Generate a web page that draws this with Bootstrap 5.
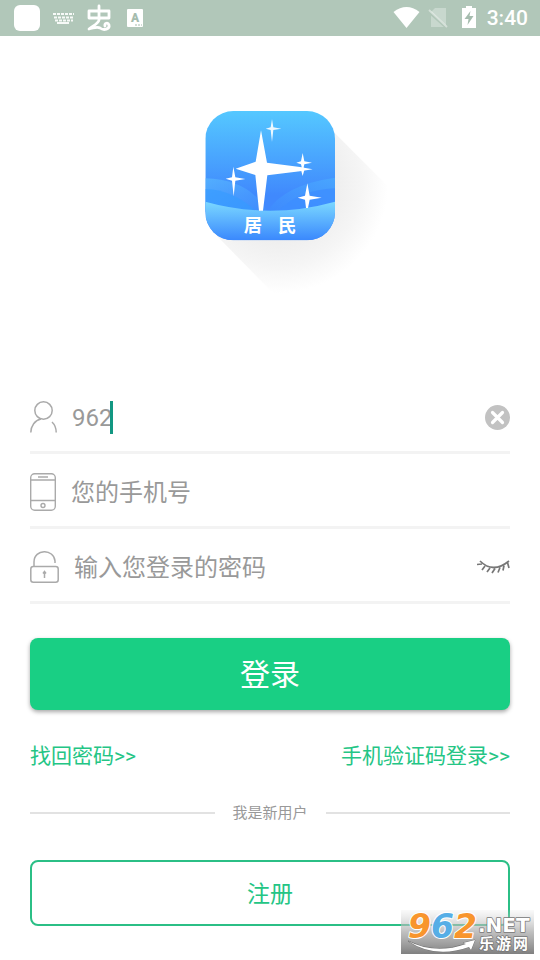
<!DOCTYPE html>
<html lang="zh-CN">
<head>
<meta charset="utf-8">
<meta name="viewport" content="width=device-width, initial-scale=1">
<title>登录</title>
<link href="https://cdn.jsdelivr.net/npm/bootstrap@5.3.0/dist/css/bootstrap.min.css" rel="stylesheet">
<style>
  body { font-family: Roboto, "Noto Sans CJK SC", sans-serif; color: #999; background: #fff; }
  svg { display: block; flex-shrink: 0; }
  .status { height: 36px; background: #b1c7b9; padding: 0 12px 0 14px; }
  .clock { font-size: 21px; line-height: 38px; font-weight: 500; }
  .brand { padding: 59px 0 84px; }
  .page { padding: 0 30px; }
  .field { height: 75px; gap: 15px; padding-top: 4px; border-bottom: 3px solid #f3f3f3; }
  .field input { font-size: 24px; line-height: 36px; padding: 2px 0 0; color: #999; outline: 0; }
  .field input::placeholder { color: #999; opacity: 1; }
  .caret { left: 38px; width: 3px; height: 33px; background: #129782; }
  .btn-login { height: 72px; margin-top: 34px; font-size: 30px; line-height: 45px; border-radius: 8px; border: 0;
    --bs-btn-bg: #19cf84; --bs-btn-color: #fff; --bs-btn-hover-bg: #16bd78; --bs-btn-hover-color: #fff; box-shadow: 0 2px 4px rgba(0,0,0,.35); }
  .links { margin-top: 30px; font-size: 21px; line-height: 32px; }
  .links a { color: #24c585; }
  .newuser { margin-top: 29px; gap: 18px; font-size: 15px; line-height: 24px; }
  .rule { height: 2px; background: #e2e2e2; }
  .btn-reg { height: 66px; margin-top: 35px; padding: 8px 12px 4px; font-size: 23px; line-height: 36px; border-radius: 8px; border: 2px solid #2bbf86;
    --bs-btn-color: #24c585; --bs-btn-hover-color: #fff; --bs-btn-hover-bg: #24c585; }
  .stamp { right: 6px; bottom: 6px; pointer-events: none; }
  .stamp svg { overflow: visible; }
</style>
</head>
<body>
<div class="position-relative min-vh-100">
  <header class="status d-flex align-items-center justify-content-between text-white">
    <div class="d-flex align-items-center">
      <svg width="130" height="36" viewBox="14 0 130 36" aria-hidden="true">
        <rect x="14" y="5" width="26" height="26" rx="6" fill="#fff"/>
        <g fill="none" stroke="#fff" stroke-opacity=".9" stroke-width="2" stroke-dasharray="3 1"><path d="M53 14h21M54 17.500h19M55 20.500h18"/><path d="M57 23h12" stroke-dasharray="none"/></g>
        <g fill="none" stroke="#fff" stroke-width="2.800" stroke-linecap="round" stroke-linejoin="round">
          <path d="M99 6V20M89 11H109V18H89ZM99 20C98 24 94 25 89 29C94 28 97 26 100 28C104 31 110 29 109 25C108 22 104 23 105 26"/>
        </g>
        <rect x="127" y="9" width="16" height="18" rx="1" fill="#fff"/>
        <text x="135" y="22" text-anchor="middle" font-family="Roboto, sans-serif" font-size="12" font-weight="900" fill="#a5bcae">A</text>
        <path d="M135 25h7" stroke="#a5bcae" stroke-dasharray="2 1"/>
      </svg>
    </div>
    <div class="d-flex align-items-center">
      <svg width="94" height="36" viewBox="392 0 94 36" aria-hidden="true">
        <path d="M392.500 12Q405.500 2 418.500 12L405.500 28Z" fill="#fff"/>
        <path d="M434 8h11v19h-15V12Z" fill="#fff" fill-opacity=".3"/>
        <path d="M427 11l19 17" stroke="#b1c7b9" stroke-width="3"/><path d="M428 10l18 17" stroke="#fff" stroke-opacity=".45" stroke-width="1.800"/>
        <path d="M461 8h4V6h6v2h4v20h-14Z" fill="#fff"/><path d="M469.500 11l-6 8h4l-1 6 6-9h-4Z" fill="#a5bcae"/>
      </svg>
      <span class="clock">3:40</span>
    </div>
  </header>

  <div class="brand d-flex justify-content-center">
    <svg width="240" height="200" viewBox="-120 0 720 600" role="img" aria-label="居民">
      <defs>
        <linearGradient id="sky" x2="0" y2="1"><stop stop-color="#55c8ff"/><stop offset=".65" stop-color="#4089fd"/><stop offset="1" stop-color="#4089fd"/></linearGradient>
        <linearGradient id="band" x2="0" y2="1"><stop stop-color="#7bd8ff"/><stop offset="1" stop-color="#3a88fd"/></linearGradient>
        <linearGradient id="leaf" x2="1" y2="1"><stop stop-color="#5bbcff"/><stop offset="1" stop-color="#3f8cfd"/></linearGradient>
        <linearGradient id="leafr" x1="1" x2="0" y2="1"><stop stop-color="#4bacff"/><stop offset="1" stop-color="#3e8bfd"/></linearGradient>
        <radialGradient id="cast" gradientUnits="userSpaceOnUse" cx="265" cy="265" r="330"><stop offset=".5" stop-color="#eee"/><stop offset=".75" stop-color="#f5f5f5"/><stop offset="1" stop-color="#fff"/></radialGradient>
        <clipPath id="tile"><rect x="46" y="48" width="389" height="388" rx="84"/></clipPath>
      </defs>
      <path d="M410 90L600 280V600H255L70 412Z" fill="url(#cast)"/>
      <g clip-path="url(#tile)">
        <rect x="46" y="48" width="389" height="388" fill="url(#sky)"/>
        <path d="M46 250Q180 254 232 350H46Z" fill="url(#leaf)" opacity=".65"/>
        <path d="M46 282Q130 284 200 350H46Z" fill="#369bff" opacity=".65"/>
        <path d="M435 248Q280 270 232 350H435Z" fill="url(#leafr)" opacity=".7"/>
        <path d="M435 280Q320 286 265 350H435Z" fill="#3d8dff" opacity=".75"/>
        <path d="M46 320Q240 374 435 320V436H46Z" fill="url(#band)"/>
        <g fill="#fff">
          <path d="M213 106L231 203L330 216L368 223L330 229L232 241L219 347H207L196 240L137 221L197 200Z"/>
          <path d="M246 72L250 97L274 101L250 105L246 141L242 105L227 101L242 97Z" opacity=".9"/>
          <path d="M338 174L343 199L366 203L343 208L341 217L343 225L338 243L333 225L335 216L333 208L319 203L333 199Z"/>
          <path d="M130 215L136 247L166 252L136 257L131 304L126 257L107 251L126 247Z"/>
          <path d="M352 265L359 302L395 308L359 314L354 339H348L345 314L323 308L345 302Z"/>
        </g>
      </g>
      <g fill="#fff" font-family="'Noto Sans CJK SC', sans-serif" font-size="55" font-weight="700"><text x="161" y="410">居</text><text x="264" y="410">民</text></g>
    </svg>
  </div>

  <main class="page">
    <form>
      <div class="field d-flex align-items-center">
        <svg width="27" height="33" viewBox="0 0 27 33" fill="none" stroke="#aaa" stroke-width="1.500" aria-hidden="true"><circle cx="13.500" cy="9.500" r="8.700"/><path d="M.8 31.500C.8 25 5 19 11 18M22 21Q26.200 25 26.200 31.500"/></svg>
        <div class="position-relative d-flex align-items-center flex-grow-1">
          <input class="form-control-plaintext" type="text" value="962" aria-label="用户名">
          <span class="caret position-absolute"></span>
        </div>
        <button type="button" class="btn p-0 border-0" aria-label="清除">
          <svg width="25" height="25" viewBox="0 0 25 25"><circle cx="12.500" cy="12.500" r="12.500" fill="#c2c2c2"/><path d="M7.500 7.500l10 10m0-10l-10 10" stroke="#fff" stroke-width="3.200" stroke-linecap="round"/></svg>
        </button>
      </div>
      <div class="field d-flex align-items-center">
        <svg width="26" height="38" viewBox="0 0 26 38" fill="none" stroke="#aaa" stroke-width="1.400" aria-hidden="true"><rect x=".7" y=".7" width="24.600" height="36.600" rx="4"/><path d="M1 7H25M1 27.500H25M8 4H18"/><circle cx="13" cy="32.500" r="2"/></svg>
        <input class="form-control-plaintext" type="tel" placeholder="您的手机号" aria-label="手机号">
      </div>
      <div class="field d-flex align-items-center">
        <svg width="29" height="32" viewBox="0 0 29 32" fill="none" stroke="#aaa" stroke-width="1.500" aria-hidden="true"><rect x=".8" y="15.500" width="27.400" height="15.700" rx="2.500"/><path d="M4 15V11C4 -2.500 24 -2.500 25 10V12M14.500 20.500V27M13 22.500L14.500 20.500L16 22.500"/></svg>
        <input class="form-control-plaintext" type="password" placeholder="输入您登录的密码" aria-label="密码">
        <button type="button" class="btn p-0 border-0" aria-label="显示密码">
          <svg width="34" height="14" viewBox="0 0 34 14" fill="none" stroke="#777" stroke-width="1.700"><path d="M4 1Q17 14 33 1M1 4.500L6 4M9 6L6 10M14 8L11 12M19 8.500L16 13M24 7.500L22 12.500M28 5.500L27 10.500M31.500 2.500L33 8"/></svg>
        </button>
      </div>
      <button type="submit" class="btn btn-login w-100 d-block">登录</button>
    </form>
    <div class="links d-flex justify-content-between">
      <a class="text-decoration-none" href="#recover">找回密码&gt;&gt;</a>
      <a class="text-decoration-none" href="#sms">手机验证码登录&gt;&gt;</a>
    </div>
    <div class="newuser d-flex align-items-center">
      <span class="rule flex-fill"></span><span>我是新用户</span><span class="rule flex-fill"></span>
    </div>
    <button type="button" class="btn btn-reg w-100 d-block">注册</button>
  </main>

  <div class="stamp position-absolute">
    <svg width="133" height="44" viewBox="0 0 133 44" role="img" aria-label="962.NET 乐游网">
      <defs><linearGradient id="haze" x2="0" y2="1"><stop stop-color="#ccc" stop-opacity=".1"/><stop offset=".5" stop-color="#b4b4b4" stop-opacity=".85"/><stop offset="1" stop-color="#808080"/></linearGradient></defs>
      <rect width="133" height="44" fill="url(#haze)"/>
      <g paint-order="stroke" stroke-linejoin="round">
        <text x="7" y="28" font-family="'DejaVu Sans', sans-serif" font-size="33" font-weight="700" font-style="italic" stroke="#fff" stroke-width="2"><tspan fill="#f8952d">9</tspan><tspan fill="#56aee6">6</tspan><tspan fill="#f8952d">2</tspan></text>
        <g fill="#fff" stroke="#777" stroke-width="1.500">
          <text x="77" y="22" font-family="'DejaVu Sans', sans-serif" font-size="20" font-weight="700">.NET</text>
          <text x="78" y="39" font-family="'Noto Sans CJK SC', sans-serif" font-size="15" font-weight="700">乐</text>
          <text x="95" y="39" font-family="'Noto Sans CJK SC', sans-serif" font-size="15" font-weight="700">游</text>
          <text x="112" y="39" font-family="'Noto Sans CJK SC', sans-serif" font-size="15" font-weight="700">网</text>
          <path stroke-width="1" d="M7 31Q34 45 65 34L62 33L74 30L70 40L68 37Q34 49 7 31Z"/>
        </g>
      </g>
    </svg>
  </div>
</div>
<script src="https://cdn.jsdelivr.net/npm/bootstrap@5.3.0/dist/js/bootstrap.bundle.min.js"></script>
</body>
</html>
